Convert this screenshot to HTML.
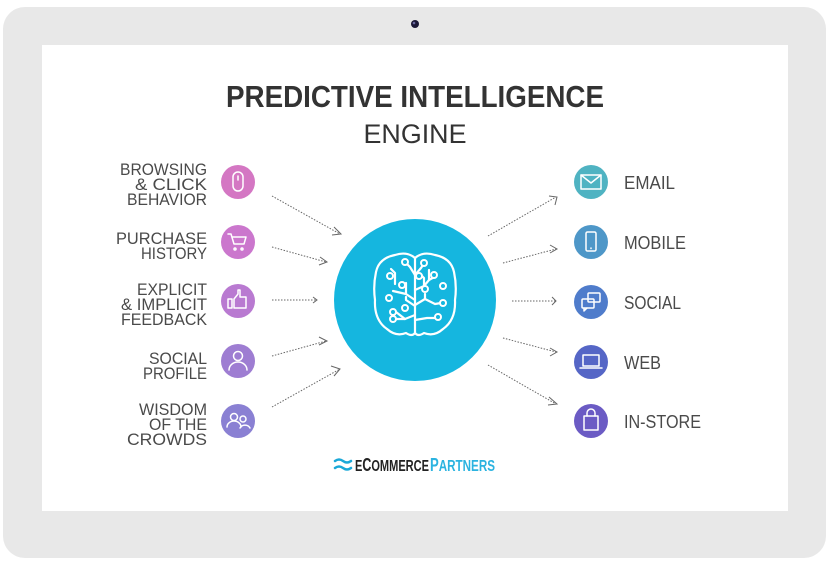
<!DOCTYPE html>
<html><head><meta charset="utf-8"><style>
html,body{margin:0;padding:0;background:#fff;}
svg{display:block}
text{font-family:"Liberation Sans",sans-serif;}
</style></head><body>
<svg width="832" height="565" viewBox="0 0 832 565" xmlns="http://www.w3.org/2000/svg">
<rect x="3" y="7" width="823" height="551" rx="22" fill="#e8e8e8"/>
<rect x="42" y="45" width="746" height="466" fill="#fff"/>
<circle cx="415" cy="24" r="4" fill="#1c1838"/>
<circle cx="414" cy="23" r="1.3" fill="#6a6aa0"/>

<text x="415" y="107" text-anchor="middle" font-size="31" font-weight="bold" fill="#333" textLength="378" lengthAdjust="spacingAndGlyphs">PREDICTIVE INTELLIGENCE</text>
<text x="415" y="143" text-anchor="middle" font-size="27" fill="#333" textLength="103" lengthAdjust="spacingAndGlyphs">ENGINE</text>

<g font-size="17" fill="#4a4a4a" text-anchor="end">
<text x="207" y="175" textLength="87" lengthAdjust="spacingAndGlyphs">BROWSING</text>
<text x="207" y="190" textLength="72" lengthAdjust="spacingAndGlyphs">&amp; CLICK</text>
<text x="207" y="205" textLength="80" lengthAdjust="spacingAndGlyphs">BEHAVIOR</text>
<text x="207" y="244" textLength="91" lengthAdjust="spacingAndGlyphs">PURCHASE</text>
<text x="207" y="259" textLength="66" lengthAdjust="spacingAndGlyphs">HISTORY</text>
<text x="207" y="295" textLength="70" lengthAdjust="spacingAndGlyphs">EXPLICIT</text>
<text x="207" y="310" textLength="86" lengthAdjust="spacingAndGlyphs">&amp; IMPLICIT</text>
<text x="207" y="325" textLength="86" lengthAdjust="spacingAndGlyphs">FEEDBACK</text>
<text x="207" y="364" textLength="58" lengthAdjust="spacingAndGlyphs">SOCIAL</text>
<text x="207" y="379" textLength="64" lengthAdjust="spacingAndGlyphs">PROFILE</text>
<text x="207" y="415" textLength="68" lengthAdjust="spacingAndGlyphs">WISDOM</text>
<text x="207" y="430" textLength="58" lengthAdjust="spacingAndGlyphs">OF THE</text>
<text x="207" y="445" textLength="80" lengthAdjust="spacingAndGlyphs">CROWDS</text>
</g>
<g font-size="18" fill="#4a4a4a">
<text x="624" y="189" textLength="51" lengthAdjust="spacingAndGlyphs">EMAIL</text>
<text x="624" y="249" textLength="62" lengthAdjust="spacingAndGlyphs">MOBILE</text>
<text x="624" y="309" textLength="57" lengthAdjust="spacingAndGlyphs">SOCIAL</text>
<text x="624" y="369" textLength="37" lengthAdjust="spacingAndGlyphs">WEB</text>
<text x="624" y="428" textLength="77" lengthAdjust="spacingAndGlyphs">IN-STORE</text>
</g>

<g stroke="#fff" stroke-width="1.5" fill="none" stroke-linecap="round" stroke-linejoin="round">
<circle cx="238" cy="182" r="17" fill="#d477c3" stroke="none"/>
<rect x="233" y="172" width="10" height="19" rx="5"/><line x1="238" y1="176" x2="238" y2="180"/>
<circle cx="238" cy="242" r="17" fill="#cb77cd" stroke="none"/>
<path d="M228 234 h3 l3 10 h10 l2 -7 h-14"/><circle cx="235" cy="249" r="1"/><circle cx="242" cy="249" r="1"/>
<circle cx="238" cy="301" r="17" fill="#b97ad1" stroke="none"/>
<rect x="228" y="299" width="4" height="9"/><path d="M234 299 l4 -5 v-4 h2 v7 h6 v11 h-12 z"/>
<circle cx="238" cy="361" r="17" fill="#9e7dd2" stroke="none"/>
<circle cx="238" cy="356" r="4.5"/><path d="M229 370 a9 8 0 0 1 18 0"/>
<circle cx="238" cy="421" r="17" fill="#8a80d3" stroke="none"/>
<circle cx="234" cy="417" r="3.5"/><path d="M227 427 a7 6 0 0 1 14 0"/><circle cx="243" cy="419" r="3"/><path d="M240 428 a5.5 5 0 0 1 10 0"/>
</g>
<g stroke="#fff" stroke-width="1.5" fill="none" stroke-linecap="round" stroke-linejoin="round">
<circle cx="591" cy="182" r="17" fill="#4fb3c2" stroke="none"/>
<rect x="581" y="175" width="20" height="14"/><path d="M581 175 l10 8 l10 -8"/>
<circle cx="591" cy="242" r="17" fill="#4e97c8" stroke="none"/>
<rect x="586" y="232" width="10" height="19" rx="1.5"/><line x1="591" y1="248" x2="591" y2="248.5"/>
<circle cx="591" cy="302" r="17" fill="#4f7ccb" stroke="none"/>
<rect x="588" y="293" width="12" height="9" rx="1"/><rect x="582" y="299" width="12" height="9" rx="1"/><path d="M584 308 v3 l3 -3"/>
<circle cx="591" cy="362" r="17" fill="#5566c6" stroke="none"/>
<rect x="583" y="355" width="16" height="11"/><path d="M580 368 h22"/>
<circle cx="591" cy="421" r="17" fill="#6b5bc4" stroke="none"/>
<rect x="584" y="416" width="14" height="14"/><path d="M587 416 v-3 a4 4 0 0 1 8 0 v3"/>
</g>

<g stroke="#666" stroke-width="1" stroke-dasharray="1.5 1.5" fill="none">
<path d="M272 196 L340 234"/><path d="M272 247 L326 262"/><path d="M272 300 L317 300"/><path d="M272 356 L326 341"/><path d="M272 407 L340 369"/>
<path d="M488 236 L556 197"/><path d="M503 263 L556 249"/><path d="M512 301 L556 301"/><path d="M503 338 L556 352"/><path d="M488 365 L556 404"/>
</g>
<g stroke="#666" stroke-width="1" fill="none">
<path d="M334 227 l7 7 l-9 1"/><path d="M320 257 l7 5 l-8 3"/><path d="M313 297 l4 3 l-4 3"/><path d="M319 337 l8 4 l-8 4"/><path d="M331 366 l9 3 l-6 7"/>
<path d="M549 196 l8 1 l-2 8"/><path d="M550 245 l7 4 l-7 4"/><path d="M552 297 l4 4 l-4 4"/><path d="M550 348 l7 4 l-7 4"/><path d="M549 397 l8 7 l-9 1"/>
</g>

<circle cx="415" cy="300" r="81" fill="#15b6df"/>
<g stroke="#fff" stroke-width="2.2" fill="none" stroke-linecap="round" stroke-linejoin="round">
<path d="M415 258 q-8 -7 -20 -3 q-16 3 -19 17 q-3 14 -1 28 q-1 20 12 29 q9 8 19 4 q6 4 9 0 q3 4 9 0 q10 4 19 -4 q13 -9 12 -29 q2 -14 -1 -28 q-3 -14 -19 -17 q-12 -4 -20 3 z"/>
<path d="M415 258 v75"/>
<path d="M415 275 l-5 -8 l-4 -4"/><path d="M415 275 l6 -7 l2 -3"/>
<path d="M415 300 l-9 -6 v-11"/><path d="M406 294 l-13 -3"/><path d="M395 284 v-11 l-4 -4"/>
<path d="M415 306 l-9 -6 v-3"/><path d="M415 315 l-10 4 l-10 0"/><path d="M405 319 l-9 -7"/>
<path d="M415 290 l9 -4 v-8 l-4 -4"/><path d="M424 286 l5 -6 v-10"/><path d="M429 280 l7 -4"/>
<path d="M415 305 l10 -6 v-5"/><path d="M425 299 l10 5 l6 -1"/><path d="M415 320 l12 -2 l9 0"/>
</g>
<g stroke="#fff" stroke-width="2" fill="#15b6df">
<circle cx="405" cy="262" r="3"/><circle cx="424" cy="263" r="3"/><circle cx="390" cy="276" r="3"/>
<circle cx="402" cy="285" r="3"/><circle cx="389" cy="298" r="3"/><circle cx="393" cy="312" r="3"/>
<circle cx="405" cy="308" r="3"/><circle cx="393" cy="319" r="3"/><circle cx="434" cy="275" r="3"/>
<circle cx="419" cy="276" r="3"/><circle cx="443" cy="286" r="3"/><circle cx="425" cy="289" r="3"/>
<circle cx="443" cy="303" r="3"/><circle cx="438" cy="317" r="3"/>
</g>

<g stroke="#1aa8d8" stroke-width="2.5" fill="none" stroke-linecap="round">
<path d="M335 461 q4 -3 8 0 t8 0"/><path d="M335 468 q4 -3 8 0 t8 0"/>
</g>
<text x="355" y="471" font-size="16" font-weight="bold" fill="#222" textLength="74" lengthAdjust="spacingAndGlyphs">E<tspan font-size="18">C</tspan>OMMERCE</text>
<text x="430" y="471" font-size="16" font-weight="bold" fill="#2bb3e0" textLength="65" lengthAdjust="spacingAndGlyphs"><tspan font-size="18">P</tspan>ARTNERS</text>
</svg>
</body></html>
